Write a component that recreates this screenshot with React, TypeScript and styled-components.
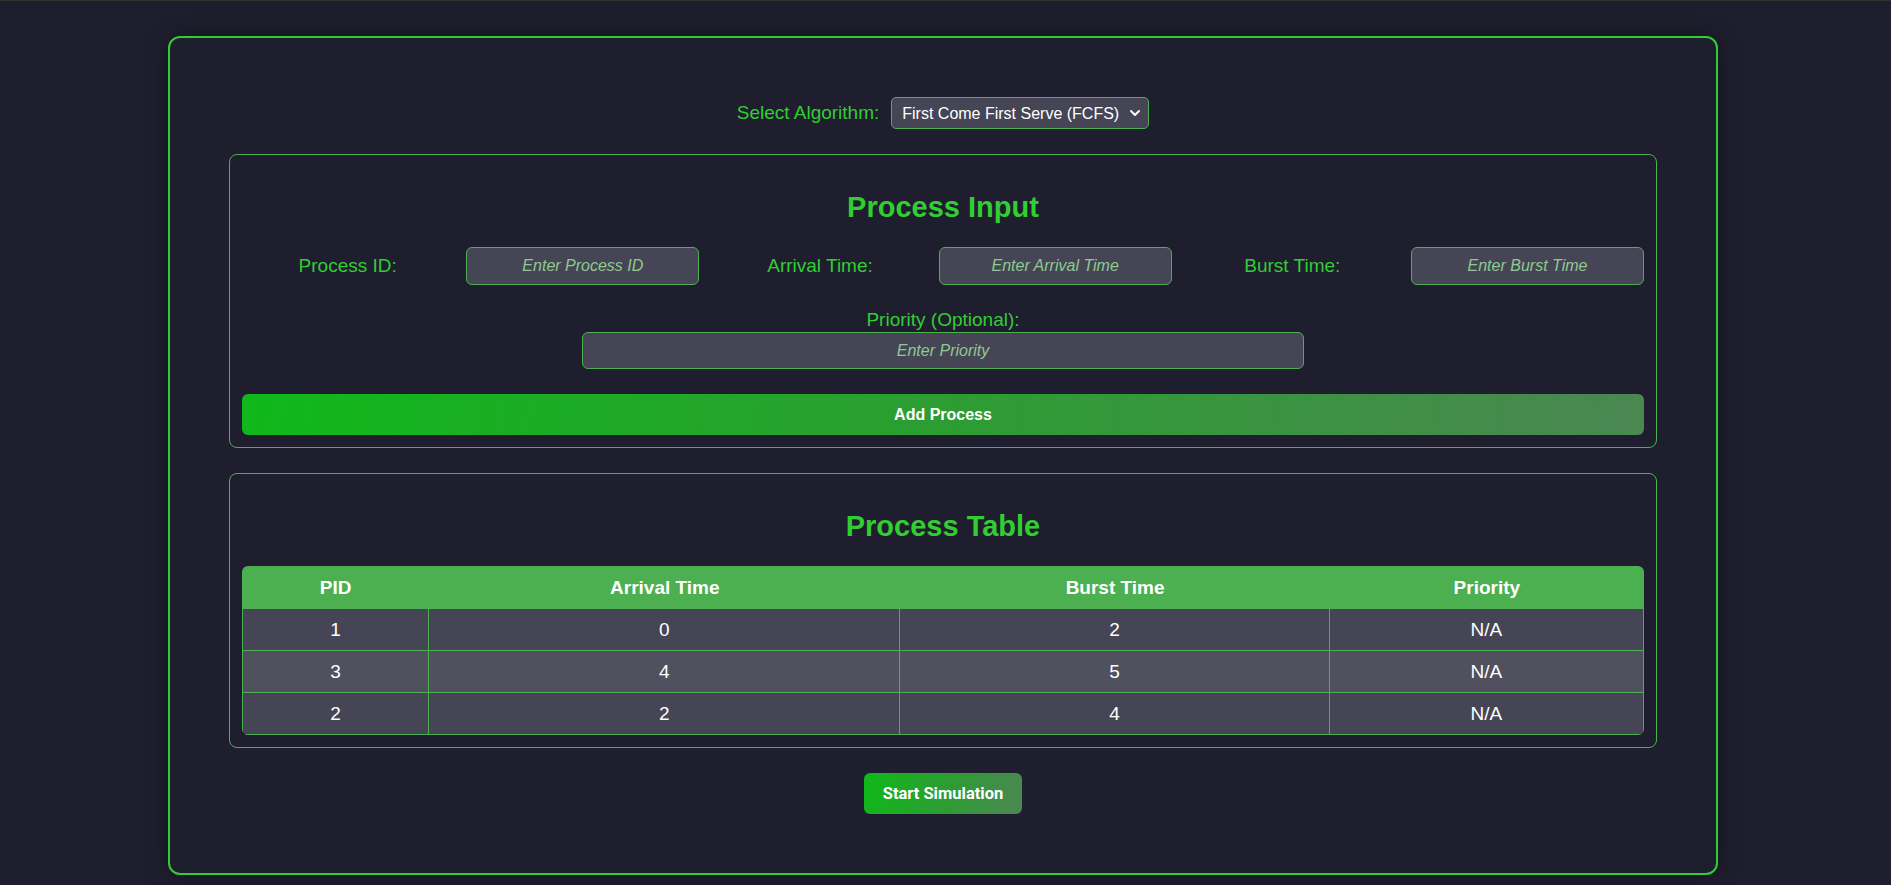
import React from "react";
import styled, { createGlobalStyle } from "styled-components";
import { ChevronDown } from "lucide-react";

const GlobalStyle = createGlobalStyle`
  html, body {
    margin: 0;
    padding: 0;
    background: #1e1e2e;
  }
  body {
    font-family: "Liberation Sans", Arial, sans-serif;
    border-top: 1px solid #313131;
    min-height: 884px;
  }
  * { box-sizing: border-box; }
`;

const Page = styled.div`
  padding-top: 35px;
  padding-bottom: 11px;
`;

const Shell = styled.div`
  width: 1550px;
  margin-left: 168px;
  border: 2px solid #32cd32;
  border-radius: 12px;
  padding: 59px;
  display: flex;
  flex-direction: column;
  gap: 25px;
  box-shadow: 0 0 24px rgba(0, 0, 0, 0.35);
`;

const AlgoRow = styled.div`
  display: flex;
  justify-content: center;
  align-items: center;
  gap: 12px;
`;

const AlgoLabel = styled.label`
  color: #32cd32;
  font-size: 19px;
`;

const SelectWrap = styled.div`
  position: relative;
  display: flex;
`;

const Select = styled.select`
  appearance: none;
  -webkit-appearance: none;
  width: 258px;
  height: 32px;
  background: #454556;
  color: #ffffff;
  border: 1px solid #4caf50;
  border-radius: 5px;
  font-family: "Liberation Sans", Arial, sans-serif;
  font-size: 16px;
  padding: 0 28px 0 10px;
  outline: none;
`;

const Chevron = styled(ChevronDown)`
  position: absolute;
  right: 6px;
  top: 50%;
  transform: translateY(-50%);
  pointer-events: none;
  color: #ffffff;
`;

const Card = styled.section`
  border: 1px solid #4caf50;
  border-radius: 8px;
  padding: 12px;
  display: flex;
  flex-direction: column;
`;

const Heading = styled.h2`
  text-align: center;
  color: #32cd32;
  font-size: 29px;
  font-weight: 700;
  line-height: 30px;
  margin: 25px 0 25px;
`;

const FieldsRow = styled.div`
  display: grid;
  grid-template-columns: repeat(3, 1fr);
  gap: 15px;
`;

const Field = styled.div`
  display: grid;
  grid-template-columns: 1fr 233px;
  gap: 13px;
  align-items: center;
`;

const FieldLabel = styled.label`
  color: #32cd32;
  font-size: 19px;
  text-align: center;
  line-height: 20px;
`;

const TextInput = styled.input<{ $width?: number; $height?: number }>`
  width: ${(p) => (p.$width ? `${p.$width}px` : "100%")};
  height: ${(p) => p.$height ?? 38}px;
  background: #454556;
  border: 1px solid #4caf50;
  border-radius: 6px;
  color: #ffffff;
  text-align: center;
  font-family: "Liberation Sans", Arial, sans-serif;
  font-size: 16px;
  outline: none;
  &::placeholder {
    font-style: italic;
    color: #8fca8f;
  }
`;

const PriorityGroup = styled.div`
  margin-top: 25px;
  display: flex;
  flex-direction: column;
  align-items: center;
  gap: 2px;
`;

const GradientButton = styled.button<{ $wide?: boolean }>`
  height: 41px;
  width: ${(p) => (p.$wide ? "100%" : "auto")};
  align-self: ${(p) => (p.$wide ? "stretch" : "center")};
  padding: 0 ${(p) => (p.$wide ? 0 : 19)}px;
  margin-top: ${(p) => (p.$wide ? 25 : 0)}px;
  border: none;
  border-radius: 6px;
  background: linear-gradient(100deg, #0fb81a 0%, #2c9d32 50%, #4b8752 100%);
  color: #ffffff;
  font-family: ${(p) => (p.$wide ? `"Liberation Sans", Arial` : `Roboto, "Open Sans"`)}, sans-serif;
  font-size: ${(p) => (p.$wide ? 16 : 16.5)}px;
  font-weight: 700;
  cursor: pointer;
`;

const TableWrap = styled.div`
  border-radius: 6px;
  overflow: hidden;
`;

const Table = styled.table`
  width: 100%;
  border-collapse: separate;
  border-spacing: 0;
  table-layout: fixed;
`;

const HeadCell = styled.th`
  background: #4caf50;
  color: #ffffff;
  font-size: 19px;
  font-weight: 700;
  line-height: 21px;
  padding: 11px 8px;
  text-align: center;
`;

const Row = styled.tr<{ $alt: boolean }>`
  background: ${(p) => (p.$alt ? "#51505f" : "#454556")};
`;

const Cell = styled.td`
  color: #ffffff;
  font-size: 19px;
  line-height: 21px;
  padding: 10px 8px;
  text-align: center;
  border-right: 1px solid #4caf50;
  border-bottom: 1px solid #4caf50;
  &:first-child {
    border-left: 1px solid #4caf50;
  }
`;

const processes = [
  { pid: 1, arrival: 0, burst: 2, priority: "N/A" },
  { pid: 3, arrival: 4, burst: 5, priority: "N/A" },
  { pid: 2, arrival: 2, burst: 4, priority: "N/A" },
];

export default function App() {
  return (
    <>
      <GlobalStyle />
      <Page>
        <Shell>
          <AlgoRow>
            <AlgoLabel htmlFor="algo">Select Algorithm:</AlgoLabel>
            <SelectWrap>
              <Select id="algo" defaultValue="fcfs">
                <option value="fcfs">First Come First Serve (FCFS)</option>
                <option value="sjf">Shortest Job First (SJF)</option>
                <option value="priority">Priority Scheduling</option>
                <option value="rr">Round Robin (RR)</option>
              </Select>
              <Chevron size={16} strokeWidth={3} />
            </SelectWrap>
          </AlgoRow>

          <Card>
            <Heading>Process Input</Heading>
            <FieldsRow>
              <Field>
                <FieldLabel>Process ID:</FieldLabel>
                <TextInput placeholder="Enter Process ID" />
              </Field>
              <Field>
                <FieldLabel>Arrival Time:</FieldLabel>
                <TextInput placeholder="Enter Arrival Time" />
              </Field>
              <Field>
                <FieldLabel>Burst Time:</FieldLabel>
                <TextInput placeholder="Enter Burst Time" />
              </Field>
            </FieldsRow>
            <PriorityGroup>
              <FieldLabel>Priority (Optional):</FieldLabel>
              <TextInput $width={722} $height={37} placeholder="Enter Priority" />
            </PriorityGroup>
            <GradientButton $wide>Add Process</GradientButton>
          </Card>

          <Card>
            <Heading>Process Table</Heading>
            <TableWrap>
              <Table>
                <colgroup>
                  <col style={{ width: 187 }} />
                  <col style={{ width: 471 }} />
                  <col style={{ width: 429 }} />
                  <col style={{ width: 314 }} />
                </colgroup>
                <thead>
                  <tr>
                    <HeadCell>PID</HeadCell>
                    <HeadCell>Arrival Time</HeadCell>
                    <HeadCell>Burst Time</HeadCell>
                    <HeadCell>Priority</HeadCell>
                  </tr>
                </thead>
                <tbody>
                  {processes.map((p, i) => (
                    <Row key={p.pid} $alt={i % 2 === 1}>
                      <Cell>{p.pid}</Cell>
                      <Cell>{p.arrival}</Cell>
                      <Cell>{p.burst}</Cell>
                      <Cell>{p.priority}</Cell>
                    </Row>
                  ))}
                </tbody>
              </Table>
            </TableWrap>
          </Card>

          <GradientButton>Start Simulation</GradientButton>
        </Shell>
      </Page>
    </>
  );
}
